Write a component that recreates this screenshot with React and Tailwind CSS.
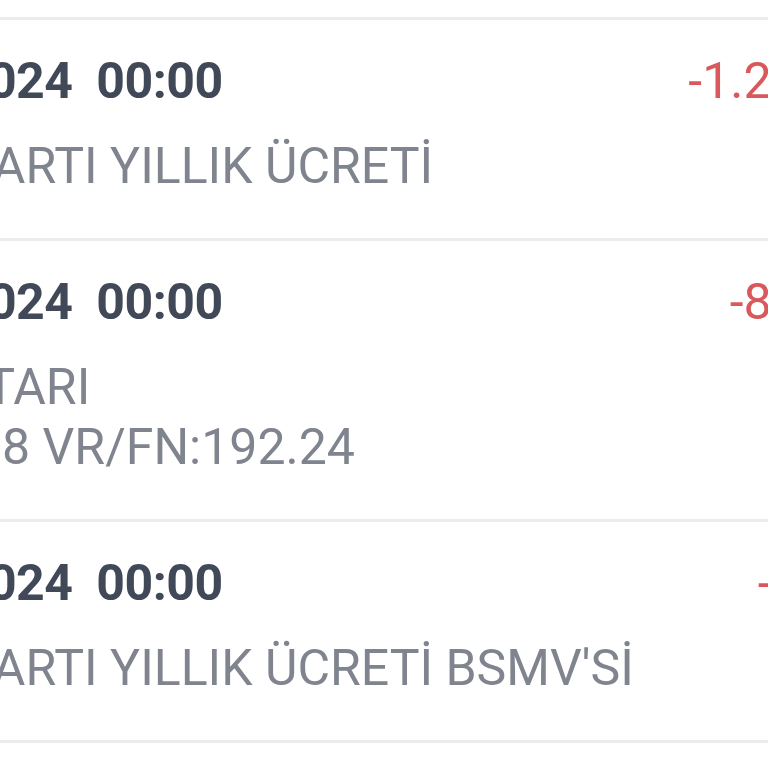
import React from 'react';

const transactions = [
  {
    date: '14.02.2024',
    time: '00:00',
    lines: ['KREDİ KARTI YILLIK ÜCRETİ'],
    amount: '-1.250,00 TL',
  },
  {
    date: '14.02.2024',
    time: '00:00',
    lines: ['FAİZ TUTARI', 'BSMV 1.8 VR/FN:192.24'],
    amount: '-850,00 TL',
  },
  {
    date: '14.02.2024',
    time: '00:00',
    lines: ["KREDİ KARTI YILLIK ÜCRETİ BSMV'Sİ"],
    amount: '-62,50 TL',
  },
];

const TransactionRow = ({ tx }) => (
  <div className="flex items-start justify-between border-b-[3px] border-[#ececec] bg-white pt-[31px] pb-[42px]">
    <div className="flex flex-col">
      <div className="text-[50px] leading-[60px] font-bold tracking-[-0.5px] text-[#414958] whitespace-pre">
        {tx.date}  {tx.time}
      </div>
      <div className="mt-[25px] -ml-[7px] flex flex-col">
        {tx.lines.map((line) => (
          <div key={line} className="text-[50px] leading-[60px] text-[#7f848e] whitespace-pre">
            {line}
          </div>
        ))}
      </div>
    </div>
    <div className="text-[50px] leading-[60px] text-[#d8585c] text-right whitespace-pre">
      {tx.amount}
    </div>
  </div>
);

export default function App() {
  return (
    <div
      className="w-full h-[768px] overflow-hidden bg-white"
      style={{ fontFamily: 'Roboto, "Noto Sans", sans-serif' }}
    >
      <div className="-ml-[181px] w-[1143px] pt-[17px]">
        <div className="border-t-[3px] border-[#ececec]">
          {transactions.map((tx, i) => (
            <TransactionRow key={i} tx={tx} />
          ))}
        </div>
      </div>
    </div>
  );
}
